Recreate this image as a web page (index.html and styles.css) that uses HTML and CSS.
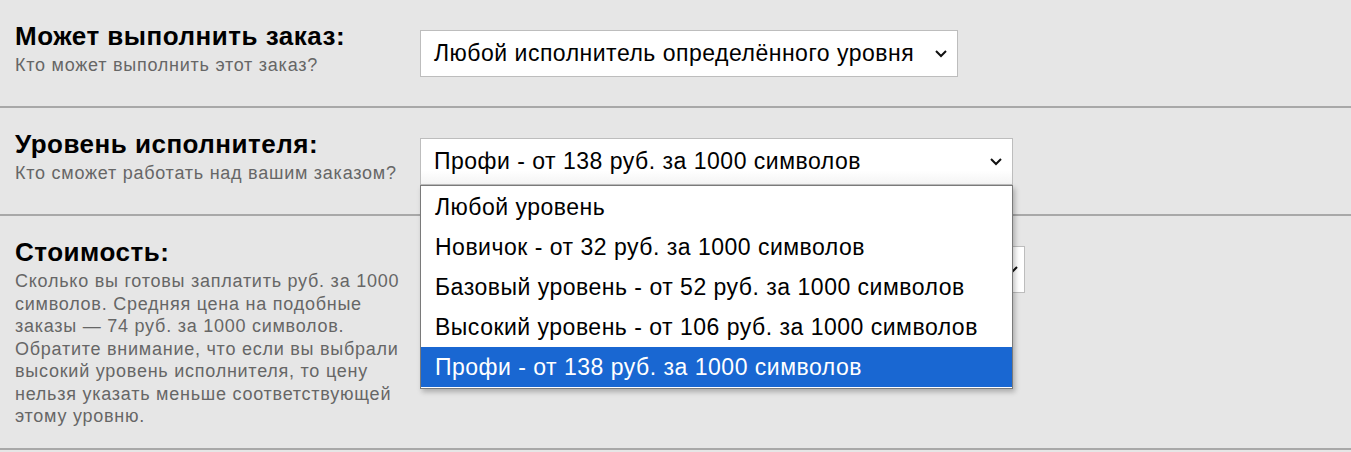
FILE: index.html
```html
<!DOCTYPE html>
<html lang="ru">
<head>
    <meta charset="UTF-8">
    <meta name="viewport" content="width=device-width, initial-scale=1.0">
    <title>Параметры заказа</title>
    <link rel="stylesheet" href="styles.css">
</head>
<body>
    <div class="field">
        <div class="field-label">
            <h3>Может выполнить заказ:</h3>
            <p>Кто может выполнить этот заказ?</p>
        </div>
        <div class="field-control">
            <div class="select">
                <span>Любой исполнитель определённого уровня</span>
                <svg class="chevron" width="14" height="9" viewBox="0 0 14 9"><path d="M2 2 L7 7 L12 2" fill="none" stroke="#111" stroke-width="2"/></svg>
            </div>
        </div>
    </div>

    <div class="field">
        <div class="field-label">
            <h3>Уровень исполнителя:</h3>
            <p>Кто сможет работать над вашим заказом?</p>
        </div>
        <div class="field-control">
            <div class="select select-level open">
                <span>Профи - от 138 руб. за 1000 символов</span>
                <svg class="chevron" width="14" height="9" viewBox="0 0 14 9"><path d="M2 2 L7 7 L12 2" fill="none" stroke="#111" stroke-width="2"/></svg>
            </div>
            <!-- выпадающий список открыт -->
            <ul class="options">
                <li>Любой уровень</li>
                <li>Новичок - от 32 руб. за 1000 символов</li>
                <li>Базовый уровень - от 52 руб. за 1000 символов</li>
                <li>Высокий уровень - от 106 руб. за 1000 символов</li>
                <li class="selected">Профи - от 138 руб. за 1000 символов</li>
            </ul>
        </div>
    </div>

    <div class="field">
        <div class="field-label">
            <h3>Стоимость:</h3>
            <p>Сколько вы готовы заплатить руб. за 1000 символов. Средняя цена на подобные заказы — 74 руб. за 1000 символов. Обратите внимание, что если вы выбрали высокий уровень исполнителя, то цену нельзя указать меньше соответствующей этому уровню.</p>
        </div>
        <div class="field-control">
            <!-- значение закрыто выпадающим списком -->
            <div class="select select-price">
                <span></span>
                <svg class="chevron" width="14" height="9" viewBox="0 0 14 9"><path d="M2 2 L7 7 L12 2" fill="none" stroke="#111" stroke-width="2"/></svg>
            </div>
        </div>
    </div>
</body>
</html>
```

FILE: styles.css
```css
body {
    font-family: "Liberation Sans", Arial, sans-serif;
    margin: 0;
    padding: 0;
    background: #e6e6e6;
    color: #000;
}

.field {
    display: flex;
    gap: 10px;
    padding: 20px 15px;
    border-bottom: 2px solid #a8a8a8;
}

.field-label {
    width: 395px;
    flex-shrink: 0;
}

.field-label h3 {
    margin: 0;
    font-size: 26px;
    line-height: 32px;
    letter-spacing: 0.5px;
    font-weight: bold;
}

.field-label p {
    margin: 2px 0 0;
    font-size: 18px;
    line-height: 22.5px;
    letter-spacing: 0.75px;
    color: #666;
}

.field-control {
    position: relative; /* для выпадающего списка */
    padding: 10px 0 9px;
}

.select {
    display: inline-flex;
    align-items: center;
    height: 47px;
    box-sizing: border-box;
    padding: 0 9px 0 13px;
    background: #fff;
    border: 1px solid #bdbdbd;
    font-size: 23px;
    letter-spacing: 0.5px;
}

.select span {
    flex: 1;
    white-space: nowrap;
}

.select .chevron {
    margin-left: 20px;
}

.select-level {
    width: 593px;
}

.select-level.open {
    background: linear-gradient(#fff 70%, #f4f4f4);
}

.select-price {
    width: 605px;
    padding-right: 5px;
}

.options {
    position: absolute;
    top: 57px;
    left: 0;
    width: 593px;
    box-sizing: border-box;
    margin: 0;
    padding: 1px 0;
    list-style: none;
    background: #fff;
    border: 1px solid #7a7a7a;
    box-shadow: 2px 3px 5px rgba(0, 0, 0, 0.25);
    z-index: 10;
}

.options li {
    height: 40px;
    line-height: 40px;
    padding: 0 14px;
    font-size: 23px;
    letter-spacing: 0.5px;
    white-space: nowrap;
}

.options li.selected {
    background: #1967d2;
    color: #fff;
}
```
